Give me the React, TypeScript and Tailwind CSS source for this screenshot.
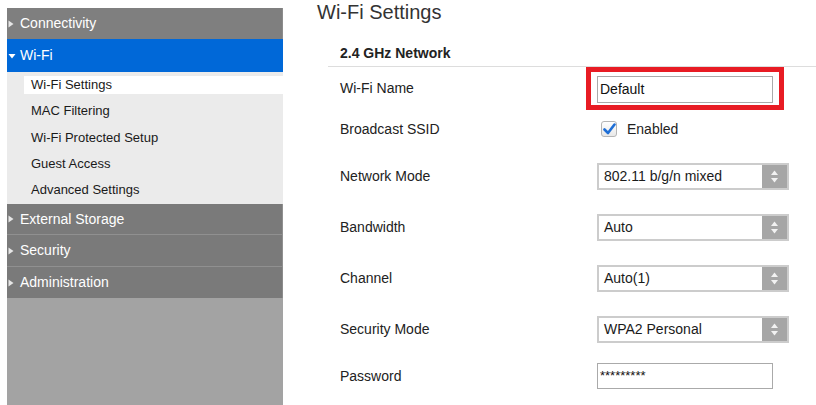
import React from "react";

const font = { fontFamily: '"Liberation Sans", Arial, sans-serif' };

function Caret({ open }: { open?: boolean }) {
  return open ? (
    <svg width="8" height="6" viewBox="0 0 8 6" className="ml-[1px] mr-[4px]">
      <path d="M0.5 1 L7.5 1 L4 5.5 Z" fill="#fff" />
    </svg>
  ) : (
    <svg width="6" height="8" viewBox="0 0 6 8" className="ml-[1px] mr-[6px]">
      <path d="M0.5 0.5 L5.5 4 L0.5 7.5 Z" fill="#e6e6e6" />
    </svg>
  );
}

function NavBar({ label, open, className }: { label: string; open?: boolean; className: string }) {
  return (
    <div className={`flex items-center text-[14px] text-white ${className}`}>
      <Caret open={open} />
      <span>{label}</span>
    </div>
  );
}

function SelectBox({ value }: { value: string }) {
  return (
    <div className="flex h-[27px] w-[192px] border-2 border-[#cccccc] bg-white">
      <div className="flex flex-1 items-center pl-[5px] text-[14px] text-[#1a1a1a]">{value}</div>
      <div className="flex w-[25px] items-center justify-center bg-[#a6a6a6]">
        <svg width="9" height="15" viewBox="0 0 9 15">
          <path d="M1 6 L4.5 1.5 L8 6 Z" fill="#f2f2f2" />
          <path d="M1 9 L8 9 L4.5 13.5 Z" fill="#f2f2f2" />
        </svg>
      </div>
    </div>
  );
}

const submenu = ["Wi-Fi Settings", "MAC Filtering", "Wi-Fi Protected Setup", "Guest Access", "Advanced Settings"];

const selects = [
  { label: "Network Mode", value: "802.11 b/g/n mixed" },
  { label: "Bandwidth", value: "Auto" },
  { label: "Channel", value: "Auto(1)" },
  { label: "Security Mode", value: "WPA2 Personal" },
];

export default function App() {
  return (
    <div className="flex h-[405px] w-[816px] overflow-hidden bg-white" style={font}>
      {/* sidebar */}
      <aside className="ml-[7px] mt-[8px] flex w-[276px] flex-col bg-[#a3a3a3]">
        <NavBar label="Connectivity" className="h-[31px] bg-[#7f7f7f] border-r border-[#8c8c8c]" />
        <NavBar label="Wi-Fi" open className="h-[33px] bg-[#0068d8]" />
        <div className="h-[132px] bg-[#ebebeb] pt-[4px]">
          {submenu.map((item, i) => (
            <div
              key={item}
              className={`ml-[17px] mb-[8.3px] h-[18px] pl-[7px] text-[13px] leading-[18px] text-[#1a1a1a] ${i === 0 ? "bg-white" : ""}`}
            >
              {item}
            </div>
          ))}
        </div>
        <NavBar label="External Storage" className="h-[31px] bg-[#7a7a7a] border-b border-r border-[#909090]" />
        <NavBar label="Security" className="h-[32px] bg-[#7a7a7a] border-b border-r border-[#909090]" />
        <NavBar label="Administration" className="h-[31px] bg-[#7a7a7a] border-r border-[#8c8c8c]" />
      </aside>

      {/* main */}
      <main className="ml-[34px] flex-1">
        <h1 className="h-[24px] text-[20px] leading-[24px] text-[#333333]">Wi-Fi Settings</h1>

        <section className="ml-[11px] mt-[16px]">
          <div className="flex h-[27px] items-center border-b border-[#dddddd] pl-[12px] text-[14px] font-bold text-[#222222]">
            2.4 GHz Network
          </div>

          <div className="pl-[12px] text-[14px] text-[#222222]">
            {/* Wi-Fi Name */}
            <div className="flex h-[43px] items-center">
              <div className="w-[246px]">Wi-Fi Name</div>
              <div className="h-[43px] w-[198px] border-[5px] border-[#e81c24] px-[6px] pt-[4px]">
                <div className="flex h-[27px] w-[176px] items-center border border-[#aaaaaa] pb-[1px] pl-[2px] text-[14px] text-[#111111]">
                  Default
                </div>
              </div>
            </div>

            {/* Broadcast SSID */}
            <div className="flex h-[41px] items-center pb-[3px]">
              <div className="w-[257px]">Broadcast SSID</div>
              <div className="ml-[4px] flex items-center">
                <div className="flex h-[16px] w-[16px] items-center justify-center rounded-[3px] border border-[#b5b5b5] bg-gradient-to-b from-white to-[#e8e8e8]">
                  <svg width="13" height="12" viewBox="0 0 13 12">
                    <path d="M1.5 6.5 L5 10 L11.5 1.5" fill="none" stroke="#1f6fd6" strokeWidth="2.6" strokeLinecap="round" strokeLinejoin="round" />
                  </svg>
                </div>
                <span className="ml-[10px]">Enabled</span>
              </div>
            </div>

            {selects.map((s) => (
              <div key={s.label} className="flex h-[51px] items-center">
                <div className="w-[257px]">{s.label}</div>
                <SelectBox value={s.value} />
              </div>
            ))}

            {/* Password */}
            <div className="flex h-[42px] items-center">
              <div className="w-[257px]">Password</div>
              <div className="h-[26px] w-[176px] border border-[#aaaaaa] px-[2px] pt-[5px] text-[13px] leading-none text-[#111111]">
                *********
              </div>
            </div>
          </div>
        </section>
      </main>
    </div>
  );
}
